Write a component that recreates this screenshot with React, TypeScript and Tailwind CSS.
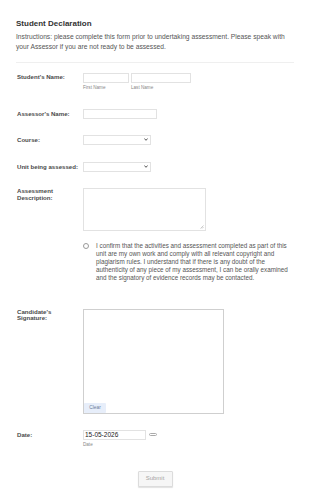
import React from "react";

function Chevron() {
  return (
    <svg width="4" height="3" viewBox="0 0 4 3" className="mr-[2px]">
      <path d="M0.4 0.5 L2 2.3 L3.6 0.5" fill="none" stroke="#444" strokeWidth="0.9" />
    </svg>
  );
}

function Label({ children, className = "" }: { children: React.ReactNode; className?: string }) {
  return (
    <div className={"w-[66px] shrink-0 text-[6.1px] font-bold leading-[6.5px] text-[#4a4a4a] " + className}>
      {children}
    </div>
  );
}

function Select({ w }: { w: string }) {
  return (
    <div className={"flex h-[10px] items-center justify-end border border-[#e2e2e2] bg-white " + w}>
      <Chevron />
    </div>
  );
}

export default function App() {
  return (
    <div className="h-[504px] w-[310px] bg-white px-4 pt-[19px] font-['Liberation_Sans',Arial,sans-serif]">
      <h1 className="text-[8px] font-bold leading-[10px] text-[#333]">Student Declaration</h1>
      <p className="mt-[2.5px] text-[6.7px] leading-[10.7px] text-[#555]">
        Instructions: please complete this form prior to undertaking assessment. Please speak with your Assessor
        if you are not ready to be assessed.
      </p>
      <div className="mt-[9px] border-t border-[#efefef]" />

      <div className="pl-[1px]">
        {/* Student's name */}
        <div className="mt-[10px] flex">
          <Label className="pt-[1.5px]">Student's Name:</Label>
          <div className="flex gap-[2px]">
            <div className="flex flex-col">
              <div className="h-[10px] w-[46px] border border-[#e2e2e2] bg-white" />
              <span className="mt-[2px] text-[4.6px] leading-[6px] text-[#888]">First Name</span>
            </div>
            <div className="flex flex-col">
              <div className="h-[10px] w-[60px] border border-[#e2e2e2] bg-white" />
              <span className="mt-[2px] text-[4.6px] leading-[6px] text-[#888]">Last Name</span>
            </div>
          </div>
        </div>

        {/* Assessor */}
        <div className="mt-[18px] flex">
          <Label className="pt-[2px]">Assessor's Name:</Label>
          <div className="h-[10px] w-[74px] border border-[#e2e2e2] bg-white" />
        </div>

        {/* Course */}
        <div className="mt-[16px] flex">
          <Label className="pt-[2px]">Course:</Label>
          <Select w="w-[68px]" />
        </div>

        {/* Unit */}
        <div className="mt-[17px] flex">
          <Label className="pt-[2px]">Unit being assessed:</Label>
          <Select w="w-[68px]" />
        </div>

        {/* Description */}
        <div className="mt-[16px] flex">
          <Label className="pt-[0.5px]">
            Assessment
            <br />
            Description:
          </Label>
          <div className="flex h-[43px] w-[123px] items-end justify-end border border-[#e2e2e2] bg-white">
            <svg width="4" height="4" viewBox="0 0 4 4" className="mb-[1px] mr-[1px]">
              <path d="M3.5 0.5 L0.5 3.5 M3.5 2 L2 3.5" stroke="#aaa" strokeWidth="0.6" />
            </svg>
          </div>
        </div>

        {/* Declaration radio */}
        <div className="mt-[11px] flex pl-[66px]">
          <div className="mt-[1px] h-[6px] w-[6px] shrink-0 rounded-full border border-[#9a9a9a] bg-white" />
          <p className="ml-[7px] w-[196px] text-[6.3px] leading-[8px] text-[#555]">
            I confirm that the activities and assessment completed as part of this unit are my own work and comply
            with all relevant copyright and plagiarism rules. I understand that if there is any doubt of the
            authenticity of any piece of my assessment, I can be orally examined and the signatory of evidence
            records may be contacted.
          </p>
        </div>

        {/* Signature */}
        <div className="mt-[27px] flex">
          <Label>
            Candidate's
            <br />
            Signature:
          </Label>
          <div className="flex h-[105px] w-[141px] flex-col items-start justify-end border border-[#cfcfcf] bg-white">
            <div className="flex h-[10px] w-[22px] items-center justify-center rounded-[1px] bg-[#e7eefa] text-[4.8px] text-[#6b7c99]">
              Clear
            </div>
          </div>
        </div>

        {/* Date */}
        <div className="mt-[16px] flex">
          <Label className="pt-[2px]">Date:</Label>
          <div className="flex flex-col">
            <div className="flex items-center">
              <div className="flex h-[10px] w-[63px] items-center border border-[#e2e2e2] bg-white pl-[1px] text-[6.5px] text-[#222]">
                15-05-2026
              </div>
              <div className="ml-[3px] h-[3px] w-[8px] rounded-full border border-[#aaa]" />
            </div>
            <span className="mt-[2px] text-[4.6px] leading-[6px] text-[#888]">Date</span>
          </div>
        </div>
      </div>

      {/* Submit */}
      <div className="mt-[23px] flex justify-center">
        <div className="flex h-[16px] w-[35px] items-center justify-center rounded-[1px] border border-[#dcdcdc] bg-[#f6f6f6] text-[6px] text-[#a5a5a5] shadow-[0_1px_1px_rgba(0,0,0,0.12)]">
          Submit
        </div>
      </div>
    </div>
  );
}
